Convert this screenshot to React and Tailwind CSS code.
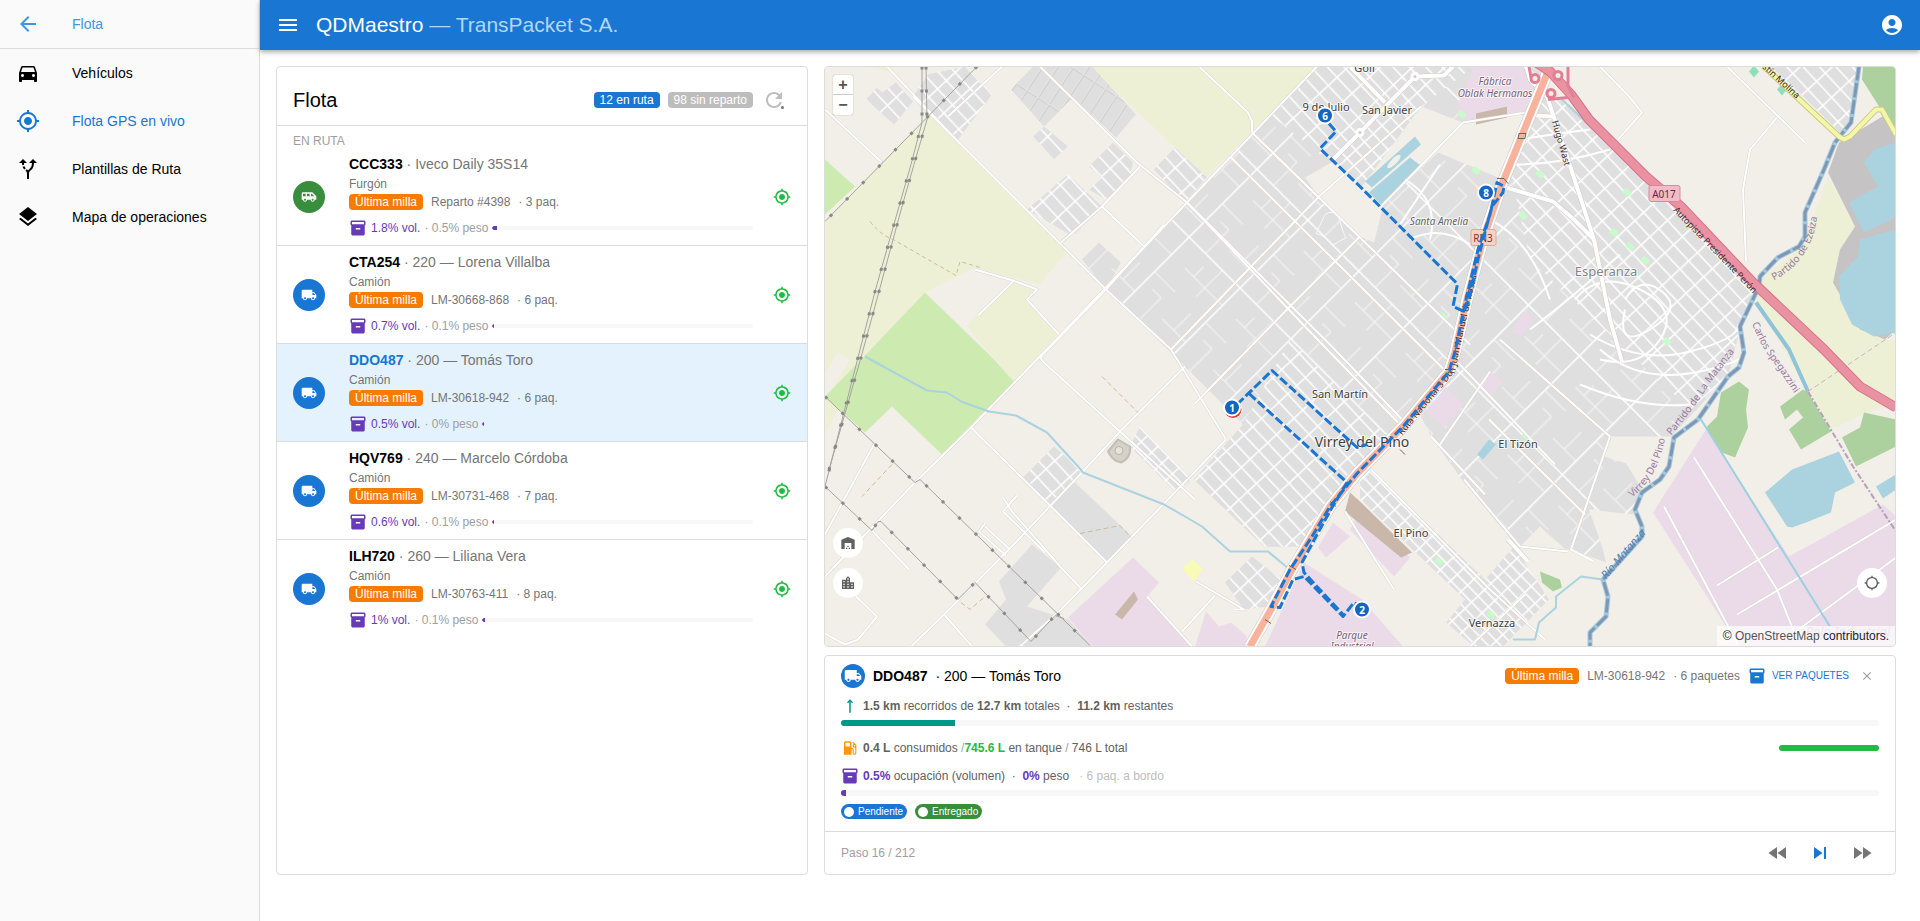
import React from 'react';
import {
    MdAccountCircle,
    MdAirportShuttle,
    MdAltRoute,
    MdArrowBack,
    MdClose,
    MdDirectionsCar,
    MdFastForward,
    MdFastRewind,
    MdGpsFixed,
    MdInventory2,
    MdLayers,
    MdLocalGasStation,
    MdLocalShipping,
    MdLocationCity,
    MdLocationSearching,
    MdMenu,
    MdRefresh,
    MdSkipNext,
    MdStraight,
    MdWarehouse,
} from 'react-icons/md';

const NAV = [
    { label: 'Vehículos', icon: MdDirectionsCar },
    { label: 'Flota GPS en vivo', icon: MdGpsFixed, active: true },
    { label: 'Plantillas de Ruta', icon: MdAltRoute },
    { label: 'Mapa de operaciones', icon: MdLayers },
];

const VEHICLES = [
    { plate: 'CCC333', name: 'Iveco Daily 35S14', type: 'Furgón', ref: 'Reparto #4398', packages: 3, vol: 1.8, weight: 0.5, van: true },
    { plate: 'CTA254', name: '220 — Lorena Villalba', type: 'Camión', ref: 'LM-30668-868', packages: 6, vol: 0.7, weight: 0.1 },
    { plate: 'DDO487', name: '200 — Tomás Toro', type: 'Camión', ref: 'LM-30618-942', packages: 6, vol: 0.5, weight: 0, selected: true },
    { plate: 'HQV769', name: '240 — Marcelo Córdoba', type: 'Camión', ref: 'LM-30731-468', packages: 7, vol: 0.6, weight: 0.1 },
    { plate: 'ILH720', name: '260 — Liliana Vera', type: 'Camión', ref: 'LM-30763-411', packages: 8, vol: 1, weight: 0.1 },
];

const Chip = ({ className, children }) => (
    <span className={`inline-flex h-4 items-center whitespace-nowrap rounded px-1.5 text-xs leading-4 text-white ${className}`}>
        {children}
    </span>
);

const Sidebar = () => (
    <aside className="w-[260px] shrink-0 border-r border-[#dcdcdc] bg-[#fafafa]">
        <a href="#inicio" className="flex h-[49px] items-center border-b border-[#dcdcdc] px-4 text-sm text-[#3d97e2]">
            <MdArrowBack className="mr-8 size-6" />
            Flota
        </a>
        <nav>
            {NAV.map(({ label, icon: Icon, active }) => (
                <a
                    key={label}
                    href="#seccion"
                    className={`flex h-12 items-center px-4 text-sm ${active ? 'text-[#1976d2]' : 'text-black'}`}
                >
                    <Icon className="mr-8 size-6" />
                    {label}
                </a>
            ))}
        </nav>
    </aside>
);

const TopBar = () => (
    <header className="z-10 flex h-[50px] shrink-0 items-center bg-[#1976d2] px-3 text-white shadow-[0_2px_5px_rgba(0,0,0,0.35)]">
        <button aria-label="Menú" className="flex size-8 items-center justify-center">
            <MdMenu className="size-6" />
        </button>
        <h1 className="flex-1 px-3 text-[21px]">
            QDMaestro <span className="text-[#b3d7f7]">— TransPacket S.A.</span>
        </h1>
        <button aria-label="Cuenta" className="flex size-8 items-center justify-center">
            <MdAccountCircle className="size-6" />
        </button>
    </header>
);

const VehicleRow = ({ vehicle }) => {
    const Icon = vehicle.van ? MdAirportShuttle : MdLocalShipping;

    return (
        <li className={`flex h-[98px] items-center border-b border-[#dcdcdc] px-4 last:border-b-0 ${vehicle.selected ? 'bg-[#e3f2fd]' : ''}`}>
            <span className={`mr-6 flex size-8 shrink-0 items-center justify-center rounded-full text-white ${vehicle.van ? 'bg-[#388e3c]' : 'bg-[#1976d2]'}`}>
                <Icon className="size-4" />
            </span>
            <div className="min-w-0 flex-1 pb-0.5">
                <div className="mb-1 text-sm leading-4 text-[#757575]">
                    <b className={vehicle.selected ? 'text-[#1976d2]' : 'text-black'}>{vehicle.plate}</b> · {vehicle.name}
                </div>
                <div className="text-xs leading-4 text-[#757575]">{vehicle.type}</div>
                <div className="flex h-5 items-center text-xs text-[#757575]">
                    <Chip className="mr-2 bg-[#f57c00]">Última milla</Chip>
                    {vehicle.ref}
                    <span className="ml-2">· {vehicle.packages} paq.</span>
                </div>
                <div className="mt-2 flex h-4 items-center gap-1 text-xs text-[#9e9e9e]">
                    <MdInventory2 className="size-[18px] text-[#673ab7]" />
                    <span className="text-[#673ab7]">{vehicle.vol}% vol.</span>
                    <span>· {vehicle.weight}% peso</span>
                    <div className={`h-1 flex-1 overflow-hidden rounded-xs ${vehicle.selected ? '' : 'bg-[#f7f7f7]'}`}>
                        <div className="h-full rounded-l-xs bg-[#673ab7]" style={{ width: `${vehicle.vol}%` }}></div>
                    </div>
                </div>
            </div>
            <MdGpsFixed className="ml-5 size-[18px] shrink-0 text-[#21ba45]" />
        </li>
    );
};

const FleetCard = () => (
    <section className="flex min-w-0 flex-col rounded border border-[#dcdcdc] bg-white">
        <div className="flex h-[59px] items-center border-b border-[#dcdcdc] px-4 pt-2">
            <h2 className="flex-1 text-xl">Flota</h2>
            <Chip className="mr-2 bg-[#1976d2]">12 en ruta</Chip>
            <Chip className="mr-1.5 bg-[#bdbdbd]">98 sin reparto</Chip>
            <button aria-label="Actualizar" className="relative mr-0.5 flex size-[30px] items-center justify-center text-[#bdbdbd]">
                <MdRefresh className="size-6" />
                <span className="absolute right-[5px] bottom-[6px] size-[3px] rounded-full bg-[#757575]"></span>
            </button>
        </div>
        <div className="px-4 pt-2 text-xs leading-[14px] text-[#9e9e9e]">EN RUTA</div>
        <ul>
            {VEHICLES.map((vehicle) => (
                <VehicleRow key={vehicle.plate} vehicle={vehicle} />
            ))}
        </ul>
    </section>
);

/* Landuse areas, painted in order: [fill, points] */
const AREAS = [
    ['#edf0d5', '1090,67 1318,67 1206,178'],
    ['#edf0d5', '929,115 1067,253 1039,285 975,268 925,293 866,355 825,435 825,222'],
    ['#f2efe9', '825,375 837,353 850,360 825,400'],
    ['#edf0d5', '1013,282 1037,290 1027,300 1059,335 1014,382 966,326'],
    ['#f2efe9', '960,278 1013,282 966,326 936,296'],
    ['#cdebb0', '925,293 992,358 1014,382 942,455 892,407 865,433 825,397 866,355'],
    ['#cdebb0', '825,160 855,187 825,215'],
    ['#edf0d5', '866,67 895,67 889,72'],
    // suburbs west of the route
    ['url(#mid)', '877,88 882,93 896,83 913,102 894,125 866,100'],
    ['url(#mid)', '928,75 965,67 992,95 958,140 913,97'],
    ['url(#long)', '1033,67 1011,90 1044,127 1073,98 1116,138 1136,115 1092,67'],
    ['url(#mid)', '1044,127 1068,147 1054,160 1033,137'],
    ['url(#mid)', '1113,143 1133,163 1130,177 1106,200 1089,190 1102,177 1089,167'],
    ['url(#mid)', '1068,175 1102,207 1073,237 1027,210'],
    ['url(#mid)', '1175,148 1207,178 1185,203 1154,170'],
    ['url(#wide)', '1099,243 1121,263 1106,290 1082,260'],
    ['url(#mid)', '1054,447 1083,472 1075,483 1049,503 1023,478'],
    ['#e0dfdf', '1075,483 1132,537 1107,563 1049,503'],
    ['url(#fine)', '1140,427 1192,480 1176,493 1130,447'],
    ['#e0dfdf', '1032,545 1061,568 1027,607 1068,620 1092,647 1006,647 985,625 1006,600 999,582'],
    ['url(#mid)', '1252,557 1281,580 1268,607 1244,610 1225,583'],
    // main built-up belt
    ['url(#wide)', '1318,67 1106,290 1185,367 1243,425 1194,480 1264,547 1304,547 1330,505 1403,425 1449,370 1467,300 1501,187 1546,70 1546,67'],
    ['url(#mid)', '1318,67 1270,115 1333,165 1362,187 1421,107 1474,67'],
    ['url(#mid)', '1243,425 1194,480 1264,547 1304,547 1330,505 1390,440 1290,340'],
    ['#f2efe9', '1305,178 1333,162 1366,190 1383,207 1374,243 1360,237 1319,197'],
    ['#f2efe9', '1421,107 1463,123 1528,113 1503,180 1438,153 1381,207 1362,187'],
    ['#ebdbe8', '1474,67 1524,67 1535,80 1526,113 1467,123 1456,110'],
    ['#c9b8a9', '1476,114 1507,107 1507,118 1476,125'],
    ['#aad3df', '1415,137 1421,145 1372,188 1365,182'],
    ['#aad3df', '1410,158 1422,167 1381,205 1369,193'],
    // Esperanza / El Tizón
    ['url(#wide)', '1542,97 1564,100 1646,180 1674,207 1755,293 1739,333 1728,377 1671,437 1610,437 1642,490 1633,515 1589,510 1603,550 1606,563 1571,550 1517,547 1464,483 1431,437 1421,417 1449,372 1467,300 1501,187'],
    ['url(#mid)', '1542,97 1564,100 1646,180 1674,207 1755,293 1739,333 1728,377 1690,410 1530,260 1510,170'],
    ['#f2efe9', '1612,437 1671,447 1662,475 1604,457'],
    ['#f2efe9', '1540,527 1568,552 1545,573 1520,547'],
    ['#ebdbe8', '1446,387 1464,405 1444,428 1426,412'],
    ['#ebdbe8', '1490,372 1503,382 1492,395 1483,387'],
    ['#ebdbe8', '1526,310 1533,320 1520,338 1512,332'],
    ['#aad3df', '1489,440 1496,445 1483,460 1477,455'],
    ['url(#fine)', '1360,477 1371,470 1485,580 1514,547 1549,600 1503,647 1474,647 1446,623 1465,600 1360,500'],
    // industrial
    ['#ebdbe8', '1133,558 1159,583 1147,597 1192,647 1092,647 1068,618'],
    ['#ebdbe8', '1206,612 1219,627 1231,623 1247,637 1245,647 1195,647'],
    ['#ebdbe8', '1304,563 1362,600 1403,647 1265,647'],
    ['#ebdbe8', '1333,523 1350,537 1326,558 1318,548'],
    ['#ebdbe8', '1360,510 1410,558 1394,577 1350,530'],
    ['#c9b8a9', '1350,493 1360,502 1412,553 1401,558 1345,512'],
    ['#c9b8a9', '1134,592 1138,600 1122,620 1115,615'],
    ['#f7fbb5', '1192,560 1203,569 1194,582 1182,569'],
    ['#ebdbe8', '1706,430 1789,557 1883,505 1896,517 1896,647 1739,647 1653,513'],
    // right bank
    ['#edf0d5', '1828,177 1855,227 1839,253 1835,283 1860,330 1896,343 1896,400 1831,430 1808,392 1756,303 1764,277 1803,247'],
    ['#c5c3c3', '1889,113 1896,133 1896,330 1885,340 1860,330 1833,283 1840,250 1855,227 1828,173 1839,143'],
    ['#aad3df', '1896,143 1874,150 1864,163 1878,187 1849,203 1864,233 1892,220 1896,215'],
    ['#aad3df', '1896,230 1860,240 1858,257 1839,277 1840,300 1852,325 1874,337 1896,333'],
    ['#aad3df', '1765,493 1792,470 1839,452 1855,483 1835,493 1831,513 1806,523 1792,528 1787,527'],
    ['#aad3df', '1876,487 1896,475 1896,490 1883,499'],
    ['#add19e', '1739,382 1749,390 1746,410 1748,428 1735,458 1722,453 1706,428 1717,417 1721,393'],
    ['#add19e', '1803,390 1808,393 1831,432 1801,450 1789,430 1803,418 1797,410 1785,420 1780,407'],
    ['#add19e', '1864,413 1896,420 1896,447 1856,467 1842,438 1860,428'],
    ['#add19e', '1540,572 1560,580 1562,588 1553,592 1542,583'],
    ['#add19e', '1863,67 1896,67 1896,130 1881,110 1862,80'],
    ['url(#mid)', '1785,67 1858,67 1848,127 1840,133 1789,83 1771,68'],
    ['#8edfc0', '1754,66 1759,72 1754,78 1749,72'],
    ['#8edfc0', '1782,84 1787,90 1782,96 1777,90'],
];

const PARKS = ['1540,175', '1627,193', '1614,233', '1630,247', '1645,261', '1523,216', '1476,171', '1443,317', '1667,342', '1526,437', '1491,615', '1439,562', '1367,440', '1462,115'];

const MINOR_ROADS = [
    '887,67 951,135',
    '825,110 882,163',
    '1002,67 948,117',
    '913,97 1106,290 1171,350 1226,440',
    '1040,67 1137,163 1187,203 1303,325 1400,425',
    '1317,67 1187,203 1061,335 971,428 911,487 825,577',
    '1199,67 1248,113 1252,122 1252,133',
    '1164,225 1106,290 1040,358',
    '1061,243 1102,207 1140,167',
    '1102,207 1144,247',
    '975,270 1013,281 1037,290 1027,300 1059,335',
    '1013,282 978,316',
    '1040,358 1044,363 1120,432 1195,500',
    '971,428 1049,505 1107,563',
    '1226,440 1107,563 1061,610 1020,647',
    '1185,367 1120,432 1082,473 1006,553 944,615 911,647',
    '944,615 972,647',
    '825,535 875,443',
    '856,597 877,617 858,640 845,645 825,634',
    '872,531 909,570',
    '1003,498 1012,512 1061,568 1082,590',
    '1017,496 1003,512 1045,553',
    '985,527 1010,550',
    '985,524 979,532 1006,556',
    '1196,582 1244,610 1234,610',
    '1147,597 1192,647',
    '1215,596 1182,632',
    '1187,203 1330,345 1402,420',
    '1230,157 1452,378',
    '1252,133 1470,345',
    '1360,237 1290,307 1194,405',
    '1319,197 1253,265 1171,350',
    '1421,107 1319,197',
    '1463,123 1381,207',
    '1463,123 1526,113',
    '1600,67 1629,97 1642,113 1618,140',
    '1727,67 1805,143',
    '1777,118 1750,150 1743,190 1746,262',
    '1694,458 1777,590 1797,640',
    '1664,507 1738,645',
    '1717,586 1778,548',
    '1737,615 1896,520',
    '1785,640 1896,558',
    '1610,437 1571,550 1594,562',
    '1464,480 1520,547 1568,552',
    '1431,437 1485,495',
    '1489,420 1585,515',
    '1455,360 1555,465',
    '1490,372 1440,445',
    '1610,437 1500,340',
    '1525,595 1470,647',
    '1371,470 1490,590 1545,640',
    '1345,512 1394,590',
];

const WHITE_ROADS = [
    '1453,67 1444,76 1415,77 1360,133 1333,160',
    '1350,67 1385,103',
    '1547,97 1569,163 1594,240',
    '1506,188 1553,202 1574,220 1594,240',
    '1547,97 1530,80 1526,67',
    '1594,240 1610,320 1622,362',
    '1535,116 1553,117',
    '1508,540 1528,562',
];

const CURVES = [
    'M1600 350 Q1640 385 1700 372 T1742 345',
    'M1590 335 Q1640 365 1690 352 T1738 325',
    'M1575 300 Q1600 270 1640 290 T1660 340 T1600 360',
    'M1625 300 Q1640 275 1662 292 T1650 330 T1625 310',
    'M1580 385 Q1640 410 1690 405',
    'M1400 225 Q1420 195 1440 165',
    'M1410 240 Q1440 225 1470 245',
    'M1405 180 Q1440 200 1430 240',
    'M1520 140 Q1550 135 1590 130',
    'M1515 165 Q1560 165 1610 150',
    'M1490 220 Q1530 240 1550 300',
    'M1530 330 Q1570 300 1620 255',
];

const POWER_LINES = [
    '922,67 922,123 911,165 899,207 875,292 858,358 825,487',
    '926,67 927,120 914,165 902,207 879,292 861,358 829,470',
    '977,67 825,222',
    '825,397 915,483 920,480 1090,646',
    '825,487 872,531 878,522 881,522 958,600 975,583 1031,642 1055,616 1064,619',
];

const RIVER = '1859,67 1851,123 1835,143 1824,170 1805,213 1805,237 1799,247 1778,258 1760,277 1759,287 1740,327 1744,353 1739,368 1728,377 1698,420 1674,438 1669,467 1660,480 1642,493 1635,510 1642,527 1642,537 1603,580 1608,597 1606,617 1590,633 1590,647';
const CREEKS = [
    '865,357 927,391 947,393 961,402 989,412 1016,416 1047,433 1078,467 1083,473 1164,505 1185,517 1202,527 1230,552 1268,552 1292,572',
    '1603,580 1581,577 1556,597 1556,608 1539,623 1535,640 1513,640',
    '1562,100 1646,180',
];
const RN3 = '1549,67 1546,77 1501,187 1483,240 1467,300 1455,353 1449,372 1403,427 1357,474 1330,507 1312,537 1292,570 1271,610 1250,647';
const A017 = '1532,60 1550,72 1571,95 1589,120 1646,177 1681,207 1753,283 1824,350 1860,387 1896,408';

const ROUTES = [
    '1329,124 1336,132 1320,149 1360,187 1457,284 1457,287 1453,307 1464,312 1469,300 1478,260 1483,240 1492,207 1503,193 1504,187 1497,183 1490,215 1478,250 1466,300 1455,352 1449,372 1403,427 1357,474 1330,507 1312,537 1290,570 1271,607 1280,608 1293,580 1304,577 1343,617 1354,603 1362,608',
    '1237,405 1272,371 1357,448 1367,445',
    '1249,394 1347,483 1332,508 1316,537 1302,563 1304,573 1343,615',
];

const PLACES = [
    { x: 1326, y: 111, size: 11, text: '9 de Julio' },
    { x: 1387, y: 114, size: 11, text: 'San Javier' },
    { x: 1365, y: 72, size: 11, text: 'Golf' },
    { x: 1340, y: 398, size: 11, text: 'San Martín' },
    { x: 1362, y: 447, size: 14, text: 'Virrey del Pino' },
    { x: 1518, y: 448, size: 11, text: 'El Tizón' },
    { x: 1411, y: 537, size: 11, text: 'El Pino' },
    { x: 1492, y: 627, size: 11, text: 'Vernazza' },
];

const STOPS = [
    { x: 1325, y: 116, label: '6' },
    { x: 1486, y: 193, label: '8' },
    { x: 1232, y: 408, label: '1' },
    { x: 1362, y: 610, label: '2' },
];

const Lines = ({ items, ...props }) => items.map((points) => <polyline key={points} points={points} {...props} />);

const MapCanvas = () => (
    <svg
        className="absolute inset-0 size-full"
        viewBox="825 67 1070 580"
        preserveAspectRatio="xMidYMid slice"
        fill="none"
        fontFamily="'Noto Sans', sans-serif"
        strokeLinejoin="round"
        role="img"
        aria-label="Mapa de la ruta"
    >
        <defs>
            <pattern id="fine" width="9" height="15" patternUnits="userSpaceOnUse" patternTransform="rotate(-44)">
                <rect width="9" height="15" fill="#e0dfdf" />
                <path d="M0 0H9M0 0V15" stroke="#fff" strokeWidth="3" />
            </pattern>
            <pattern id="mid" width="12" height="22" patternUnits="userSpaceOnUse" patternTransform="rotate(-43)">
                <rect width="12" height="22" fill="#e0dfdf" />
                <path d="M0 0H12M0 0V22" stroke="#fff" strokeWidth="3" />
            </pattern>
            <pattern id="wide" width="96" height="72" patternUnits="userSpaceOnUse" patternTransform="rotate(-45)">
                <rect width="96" height="72" fill="#e0dfdf" />
                <path d="M0 0H96M0 0V72" stroke="#fff" strokeWidth="3" />
                <path d="M0 24H34M60 48H96M48 0V30M72 20V72M20 40V72M20 56H44M72 32H86M34 12V24" stroke="#f8f8f8" strokeWidth="1" />
            </pattern>
            <pattern id="long" width="13" height="44" patternUnits="userSpaceOnUse" patternTransform="rotate(33)">
                <rect width="13" height="44" fill="#e0dfdf" />
                <path d="M0 0H13M0 0V44" stroke="#cfcdcd" strokeWidth="4" />
                <path d="M0 0H13M0 0V44" stroke="#e6e5e5" strokeWidth="2" />
            </pattern>
            <path id="label-autopista" d="M1673 211 L1755 296 L1790 330" />
            <path id="label-ruta" d="M1402 436 L1455 372 L1464 330 L1478 270 L1490 220" />
            <path id="label-ezeiza" d="M1774 281 Q1798 268 1808 247 Q1817 232 1818 205" />
            <path id="label-matanza" d="M1671 436 Q1692 412 1709 385 L1740 345" />
            <path id="label-virrey" d="M1632 498 Q1662 475 1667 425" />
            <path id="label-rio" d="M1606 580 L1665 512" />
            <path id="label-spegazzini" d="M1752 324 Q1762 350 1776 366 L1806 411" />
            <path id="label-molina" d="M1762 68 L1810 112" />
            <path id="label-wast" d="M1552 122 L1570 186" />
        </defs>

        <rect x="825" y="67" width="1071" height="581" fill="#f2efe9" />
        {AREAS.map(([fill, points]) => (
            <polygon key={points} points={points} fill={fill} />
        ))}
        {PARKS.map((point) => {
            const [x, y] = point.split(',').map(Number);
            return <rect key={point} x={x - 4} y={y - 3} width="8" height="6" rx="1" fill="#c8facc" transform={`rotate(40 ${x} ${y})`} />;
        })}
        <ellipse cx="1394" cy="162" rx="9" ry="3" fill="#f2efe9" transform="rotate(-45 1394 162)" />

        <Lines items={MINOR_ROADS} stroke="#d8d4cf" strokeWidth="3" />
        <Lines items={MINOR_ROADS} stroke="#fff" strokeWidth="2" />
        {CURVES.map((d) => (
            <path key={d} d={d} stroke="#fff" strokeWidth="2" />
        ))}
        <path d="M1325 215 Q1336 208 1340 222 T1346 238 L1332 246 Q1326 236 1316 234 Z" stroke="#f8f8f8" />
        <Lines items={WHITE_ROADS} stroke="#cfcac6" strokeWidth="5" />
        <Lines items={WHITE_ROADS} stroke="#fff" strokeWidth="4" />
        <circle cx="1415" cy="77" r="3" fill="#ccc" stroke="#fff" strokeWidth="3" />
        <circle cx="1360" cy="133" r="3" fill="#ccc" stroke="#fff" strokeWidth="3" />
        <path d="M1108 452l10-12 12 7q1 12-9 16-8-1-13-11z" fill="#d5d2c8" stroke="#c2bfb7" strokeWidth="2" />
        <circle cx="1119" cy="451" r="4" fill="#e8e4da" stroke="#b9b3a6" />

        {/* Water lines */}
        <Lines items={CREEKS} stroke="#aad3df" strokeWidth="2" />
        <polyline points="1756,303 1789,350 1808,392" stroke="#8fc3d8" strokeWidth="4" />
        <polyline points="1701,420 1830,627" stroke="#9ccfdf" strokeWidth="2" />
        <polyline points={RIVER} stroke="#a3c8dc" strokeWidth="5" />
        <polyline points={RIVER} stroke="#7f97b5" strokeWidth="3" strokeDasharray="14 3" />
        <polyline points="1808,392 1853,467 1896,532" stroke="#b9a0bd" strokeWidth="2" strokeDasharray="6 2 2 2" />
        <path d="M1808 392 L1896 333 M1831 357 L1896 412" stroke="#cdb6ae" strokeDasharray="5 3" />
        <path d="M870 222 Q880 235 893 240 L956 276 L960 262 L980 268" stroke="#c9bd95" strokeDasharray="4 3" />
        <path d="M892 465 L862 497 M1102 377 L1138 413 M1080 534 L1120 526 L1131 538 M961 603 L970 610 L985 597" stroke="#c9bd95" strokeDasharray="5 3" />

        <Lines items={POWER_LINES} stroke="#a5a3a0" strokeWidth="1" />
        <Lines items={POWER_LINES} stroke="#8a8987" strokeWidth="3" strokeDasharray="3 20" />

        {/* Main roads */}
        <polyline points="1764,67 1839,137 1844,140 1850,137 1876,110 1882,110 1896,135" stroke="#c9c98a" strokeWidth="6" />
        <polyline points="1764,67 1839,137 1844,140 1850,137 1876,110 1882,110 1896,135" stroke="#f4f7a8" strokeWidth="4" />
        <polyline points={RN3} stroke="#c9c4c0" strokeWidth="12" />
        <polyline points={RN3} stroke="#fff" strokeWidth="11" />
        <polyline points={RN3} stroke="#f9b29c" strokeWidth="7" />
        <polyline points={A017} stroke="#dd7089" strokeWidth="10" />
        <polyline points={A017} stroke="#e892a2" strokeWidth="8" />
        <g stroke="#e27f94" strokeWidth="3" fill="#f2efe9">
            <circle cx="1535" cy="79" r="4" />
            <circle cx="1558" cy="76" r="4" />
            <circle cx="1551" cy="94" r="4" />
            <path d="M1529 67 L1531 78 M1568 67 V86 L1574 98 M1548 100 L1568 98" fill="none" />
        </g>
        <path d="M1519 134h7l-1 5h-7zM1497 179h7l4 5M1445 370h7M1400 450l5 5M1330 502l6 5M1289 566l7 4M1265 620l6 4" stroke="#70645e" />

        {/* Road shields */}
        <rect x="1649" y="186" width="31" height="16" rx="2" fill="#f0bcc7" stroke="#d98b9b" />
        <text x="1664" y="198" fontSize="10" fill="#6d2a3a" textAnchor="middle">A017</text>
        <rect x="1471" y="230" width="25" height="16" rx="2" fill="#fad1c5" stroke="#e6a692" />
        <text x="1483" y="242" fontSize="10" fill="#7a3524" textAnchor="middle">RN3</text>

        {/* Place names */}
        <g textAnchor="middle" paintOrder="stroke" stroke="#fff" strokeOpacity="0.7" strokeWidth="2">
            {PLACES.map(({ x, y, size, text }) => (
                <text key={text} x={x} y={y} fontSize={size} fill="#404040">{text}</text>
            ))}
            <text x="1606" y="276" fontSize="13" fill="#868686">Esperanza</text>
            <g fontStyle="italic" fontSize="10" fill="#7c6178">
                <text x="1495" y="85">Fábrica</text>
                <text x="1495" y="97">Oblak Hermanos</text>
                <text x="1352" y="639">Parque</text>
                <text x="1352" y="650">Industrial</text>
            </g>
            <text x="1439" y="225" fontSize="10" fontStyle="italic" fill="#666">Santa Amelia</text>
        </g>
        <g fontSize="9" fill="#3c2a2e">
            <text><textPath href="#label-autopista">Autopista Presidente Perón</textPath></text>
            <text><textPath href="#label-ruta">Ruta Nacional 3 Don Juan Manuel de Rosas</textPath></text>
            <text><textPath href="#label-molina">stín Molina</textPath></text>
            <text><textPath href="#label-wast">Hugo Wast</textPath></text>
        </g>
        <g fontSize="10" fill="#98789f">
            <text><textPath href="#label-ezeiza">Partido de Ezeiza</textPath></text>
            <text><textPath href="#label-matanza">Partido de La Matanza</textPath></text>
            <text><textPath href="#label-virrey">Virrey Del Pino</textPath></text>
            <text><textPath href="#label-spegazzini">Carlos Spegazzini</textPath></text>
        </g>
        <text fontSize="11" fontStyle="italic" fill="#4d80b3"><textPath href="#label-rio">Río Matanza</textPath></text>
        <text x="1848" y="636" fontSize="13" fontStyle="italic" fill="#c3b0c3" textAnchor="middle">Polo Industrial</text>

        {/* Planned route and its stops */}
        <Lines items={ROUTES} stroke="#1976d2" strokeWidth="3" strokeDasharray="9 3" />
        <circle cx="1233" cy="410" r="9" fill="#e53935" stroke="#fff" />
        {STOPS.map(({ x, y, label }) => (
            <g key={label}>
                <circle cx={x} cy={y} r="8" fill="#1565c0" stroke="#fff" strokeWidth="2" />
                <text x={x} y={y + 4} fontSize="10" fontWeight="700" fill="#fff" textAnchor="middle">{label}</text>
            </g>
        ))}
    </svg>
);

const MapButton = ({ label, icon: Icon }) => (
    <button aria-label={label} className="flex size-[30px] items-center justify-center rounded-full bg-white text-[#616161]">
        <Icon className="size-4" />
    </button>
);

const MapPanel = () => (
    <section className="relative min-h-[300px] flex-1 overflow-hidden rounded border border-[#dcdcdc]">
        <MapCanvas />
        <div className="absolute top-2 left-2 flex w-5 flex-col divide-y divide-[#ccc] rounded-xs bg-white text-[#555] shadow-[0_0_1px_rgba(0,0,0,0.5)]">
            <button aria-label="Acercar" className="h-5 text-base leading-5 font-bold">+</button>
            <button aria-label="Alejar" className="h-5 text-base leading-5 font-bold">−</button>
        </div>
        <div className="absolute bottom-12 left-2 flex flex-col gap-2.5">
            <MapButton label="Depósitos" icon={MdWarehouse} />
            <MapButton label="Sucursales" icon={MdLocationCity} />
        </div>
        <div className="absolute right-2 bottom-12">
            <MapButton label="Centrar" icon={MdLocationSearching} />
        </div>
        <div className="absolute right-0 bottom-0 bg-white/70 px-1.5 text-xs leading-5 text-[#222]">
            © <a href="#osm" className="text-[#555]">OpenStreetMap</a> contributors.
        </div>
    </section>
);

const StatusPill = ({ className, children }) => (
    <span className={`flex h-[15px] items-center gap-1 rounded-full pr-1 pl-[3px] text-[10px] font-medium text-white ${className}`}>
        <span className="size-2.5 rounded-full bg-white"></span>
        {children}
    </span>
);

const DetailCard = () => (
    <section className="shrink-0 rounded border border-[#dcdcdc] bg-white text-xs leading-4 text-[#616161]">
        <div className="px-4 pt-2 pb-3">
            <div className="flex h-6 items-center">
                <span className="mr-2 flex size-6 items-center justify-center rounded-full bg-[#1976d2] text-white">
                    <MdLocalShipping className="size-[18px]" />
                </span>
                <b className="text-sm text-black">DDO487</b>
                <span className="ml-2 flex-1 text-sm text-black">· 200 — Tomás Toro</span>
                <Chip className="mr-2 bg-[#f57c00]">Última milla</Chip>
                <span className="text-[#757575]">LM-30618-942</span>
                <span className="ml-2 text-[#757575]">· 6 paquetes</span>
                <button className="ml-2 flex items-center gap-1.5 text-[10px] text-[#1976d2]">
                    <MdInventory2 className="size-[18px]" />
                    VER PAQUETES
                </button>
                <button aria-label="Cerrar" className="ml-1.5 flex size-6 items-center justify-center text-[#9e9e9e]">
                    <MdClose className="size-3.5" />
                </button>
            </div>

            {/* Distance */}
            <div className="mt-2.5 flex h-4 items-center gap-1">
                <MdStraight className="size-[18px] text-[#009688]" />
                <span className="whitespace-pre"><b>1.5 km</b> recorridos de <b>12.7 km</b> totales  ·  <b>11.2 km</b> restantes</span>
            </div>
            <div className="mt-1.5 h-1.5 overflow-hidden rounded-full bg-[#f7f7f7]">
                <div className="h-full w-[11%] bg-[#009688]"></div>
            </div>

            {/* Fuel */}
            <div className="mt-3.5 flex h-4 items-center gap-1">
                <MdLocalGasStation className="size-[18px] text-[#ff9800]" />
                <span className="flex-1">
                    <b>0.4 L</b> consumidos <span className="text-[#9e9e9e]">/</span>
                    <b className="text-[#21ba45]">745.6 L</b> en tanque <span className="text-[#9e9e9e]">/</span> 746 L total
                </span>
                <div className="h-1.5 w-[100px] rounded-full bg-[#21ba45]"></div>
            </div>

            {/* Load */}
            <div className="mt-3 flex h-4 items-center gap-1">
                <MdInventory2 className="size-[18px] text-[#673ab7]" />
                <span className="whitespace-pre">
                    <b className="text-[#673ab7]">0.5%</b> ocupación (volumen)  ·  <b className="text-[#673ab7]">0%</b> peso  <span className="text-[#bdbdbd]"> · 6 paq. a bordo</span>
                </span>
            </div>
            <div className="mt-1.5 h-1.5 overflow-hidden rounded-full bg-[#f7f7f7]">
                <div className="h-full w-[5px] bg-[#673ab7]"></div>
            </div>

            <div className="mt-2 flex gap-2">
                <StatusPill className="bg-[#1976d2]">Pendiente</StatusPill>
                <StatusPill className="bg-[#388e3c]">Entregado</StatusPill>
            </div>
        </div>

        <div className="flex h-[43px] items-center gap-2 border-t border-[#dcdcdc] px-4">
            <span className="flex-1 text-[#9e9e9e]">Paso 16 / 212</span>
            <button aria-label="Retroceder" className="flex size-[34px] items-center justify-center text-[#757575]">
                <MdFastRewind className="size-6" />
            </button>
            <button aria-label="Siguiente paso" className="flex size-[34px] items-center justify-center text-[#1976d2]">
                <MdSkipNext className="size-6" />
            </button>
            <button aria-label="Avanzar" className="flex size-[34px] items-center justify-center text-[#757575]">
                <MdFastForward className="size-6" />
            </button>
        </div>
    </section>
);

const App = () => (
    <div className="flex min-h-screen bg-white font-['Liberation_Sans',Arial,sans-serif] text-black">
        <Sidebar />
        <div className="flex min-w-0 flex-1 flex-col">
            <TopBar />
            <main className="grid flex-1 grid-cols-[532fr_1072fr] gap-4 pt-4 pr-6 pb-[46px] pl-4">
                <FleetCard />
                <div className="flex min-w-0 flex-col gap-2">
                    <MapPanel />
                    <DetailCard />
                </div>
            </main>
        </div>
    </div>
);

export default App;
